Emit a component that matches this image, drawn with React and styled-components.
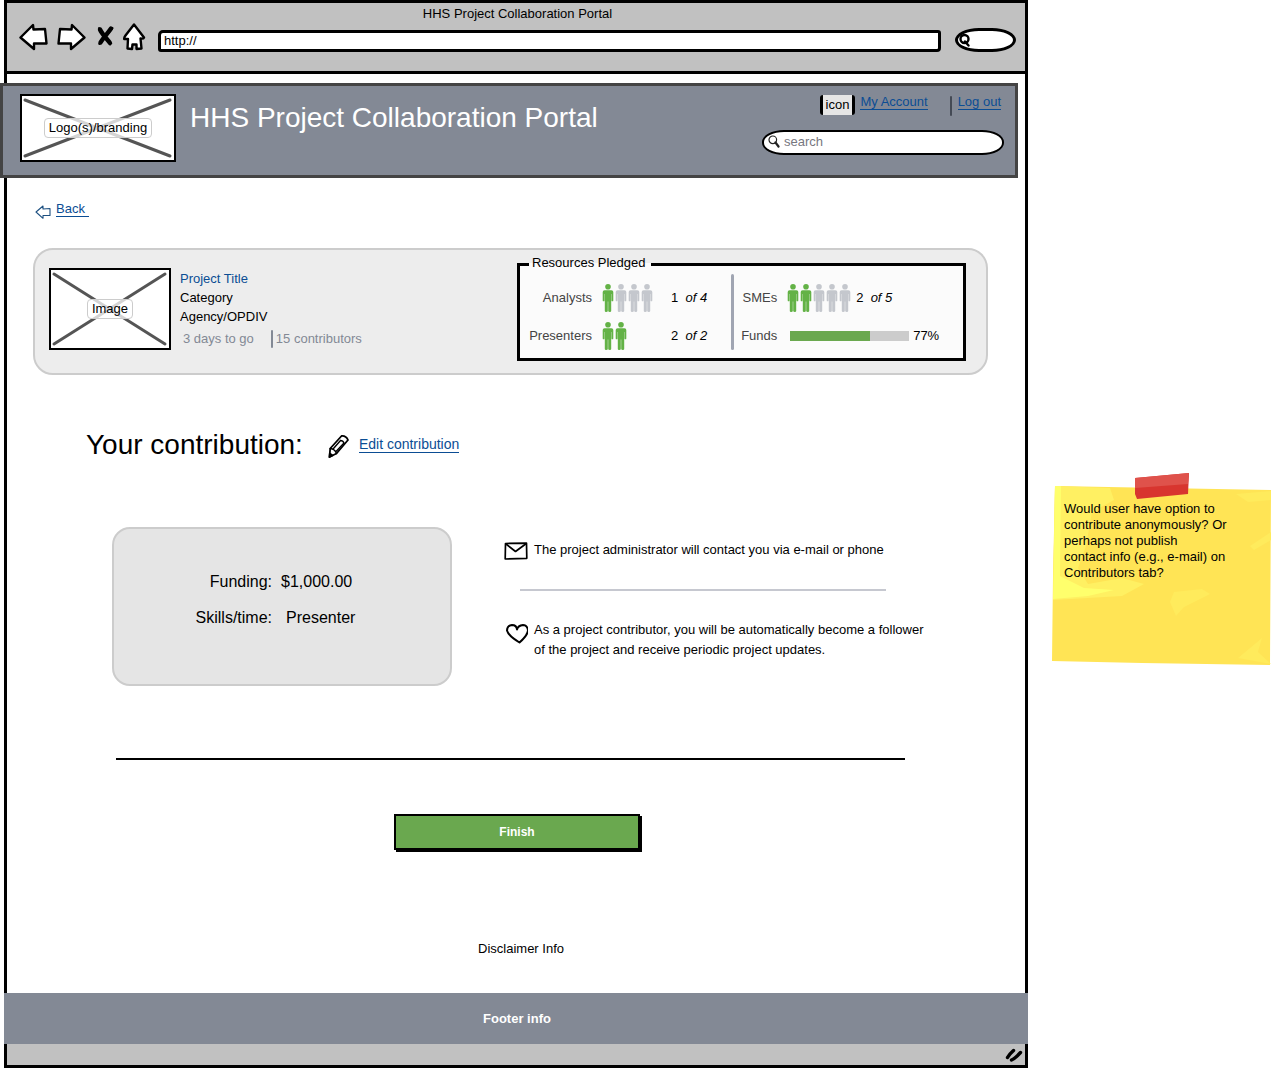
import React from 'react';
import styled, { createGlobalStyle } from 'styled-components';

const INK = '#000';
const SLATE = '#838995';
const LINK = '#0b4d94';
const GREEN = '#6aa84f';

const GlobalStyle = createGlobalStyle`
  *, *::before, *::after { box-sizing: border-box; }
  body {
    margin: 0;
    background: #fff;
    color: ${INK};
    font: 13px/18px "Liberation Sans", Arial, sans-serif;
  }
  h1, h2, p, dl, dd { margin: 0; }
  button, input { font: inherit; color: inherit; }
  svg { display: block; flex: none; }
`;

const Page = styled.div`
  display: grid;
  grid-template-columns: minmax(0, 1fr) 219px;
  gap: 24px;
  align-items: start;
  padding: 0 2px 0 4px;
`;

/* Browser window */
const Window = styled.div`
  border: 3px solid ${INK};
  background: #fff;
`;

const Chrome = styled.div`
  background: #c1c1c1;
  border-bottom: 3px solid ${INK};
  padding: 2px 9px 18px 12px;
`;

const WindowTitle = styled.div`
  padding-top: 1px;
  text-align: center;
  line-height: 15px;
`;

const Toolbar = styled.div`
  display: flex;
  align-items: center;
  height: 32px;
`;

const NavButtons = styled.div`
  display: flex;
  align-items: center;
  gap: 8px;
  margin-right: 11px;
`;

const IconButton = styled.button`
  display: block;
  padding: 0;
  border: 0;
  background: none;
`;

const AddressInput = styled.input`
  flex: 1;
  min-width: 0;
  height: 22px;
  margin-top: 7px;
  padding: 0 3px 1px;
  border: 3px solid ${INK};
  border-radius: 5px 3px 4px 3px;
  background: #fff;
`;

const ChromeSearch = styled.label`
  display: flex;
  align-items: center;
  width: 61px;
  height: 24px;
  margin: 6px 0 0 14px;
  padding-left: 1px;
  border: 3px solid ${INK};
  border-radius: 24px / 12px;
  background: #fff;
`;

const BareInput = styled.input`
  flex: 1;
  min-width: 0;
  padding: 0;
  border: 0;
  outline: 0;
  background: none;
  &::placeholder { color: #77777f; opacity: 1; }
`;

/* Site header */
const SiteHeader = styled.header`
  display: flex;
  align-items: flex-start;
  gap: 14px;
  margin: 9px 7px 0 -7px;
  padding: 8px 11px 13px 17px;
  border: 3px solid #444;
  background: ${SLATE};
`;

const SiteTitle = styled.h1`
  flex: 1;
  padding-top: 8px;
  color: #fff;
  font-size: 28px;
  font-weight: 400;
  line-height: 32px;
`;

const HeaderTools = styled.div`
  width: 242px;
`;

const AccountLinks = styled.nav`
  display: flex;
  align-items: flex-start;
  justify-content: flex-end;
  height: 22px;
  padding-right: 3px;
`;

const Link = styled.a`
  color: ${LINK};
  font-size: ${(p) => (p.$large ? '14px' : '13px')};
  line-height: 15px;
  white-space: pre;
  text-decoration: none;
  border-bottom: 1px solid ${LINK};
`;

const AccountIcon = styled.span`
  margin: 1px 5px 0 0;
  padding: 0 3px;
  border: solid ${INK};
  border-width: 0 3px;
  border-radius: 3px;
  background: #e6e6e6;
  line-height: 20px;
`;

const Divider = styled.span`
  width: ${(p) => p.$width || '2px'};
  margin: ${(p) => p.$margin || '0'};
  border-radius: 2px;
  background: ${(p) => p.$color || SLATE};
  align-self: stretch;
`;

const SiteSearch = styled.label`
  display: flex;
  align-items: center;
  gap: 4px;
  height: 25px;
  margin-top: 14px;
  padding: 0 12px 2px 4px;
  border: 2px solid ${INK};
  border-radius: 22px / 12px;
  background: #fff;
`;

/* Image placeholder */
const PlaceholderBox = styled.div`
  position: relative;
  display: flex;
  flex: none;
  align-items: center;
  justify-content: center;
  width: ${(p) => p.$width};
  height: ${(p) => p.$height};
  margin-top: ${(p) => p.$top || '0'};
  border: 2px solid ${INK};
  background: #fff;
  > svg { position: absolute; inset: 0; }
`;

const PlaceholderLabel = styled.span`
  position: relative;
  padding: 0 4px;
  border: 1px solid #ccc;
  border-radius: 4px;
  background: rgba(255, 255, 255, 0.75);
`;

/* Main content */
const Main = styled.main`
  padding: 23px 37px 0 26px;
`;

const BackRow = styled.div`
  display: flex;
  align-items: flex-start;
  gap: 5px;
  height: 18px;
  padding-left: 2px;
  > svg { margin-top: 4px; }
`;

const ProjectCard = styled.section`
  display: flex;
  align-items: flex-start;
  margin-top: 29px;
  padding: 4px 20px 12px 14px;
  border: 2px solid #ccc;
  border-radius: 20px;
  background: #ededed;
`;

const ProjectText = styled.div`
  display: grid;
  gap: 1px;
  flex: 1;
  padding: 16px 0 0 9px;
`;

const ProjectTitle = styled.h2`
  color: ${LINK};
  font-size: 13px;
  font-weight: 400;
`;

const ProjectMeta = styled.div`
  display: flex;
  padding: 3px 0 0 3px;
  color: ${SLATE};
`;

const Resources = styled.fieldset`
  display: block;
  width: 449px;
  min-width: 0;
  margin: 0;
  padding: 0 9px;
  border: 3px solid ${INK};
  background: #fbfbfb;
`;

const ResourcesLegend = styled.legend`
  padding: 0 6px 2px 3px;
  line-height: 18px;
`;

const ResourceColumns = styled.div`
  display: flex;
  padding-bottom: 8px;
`;

const ResourceColumn = styled.div`
  display: grid;
  gap: 10px;
  padding: 10px 0 0 ${(p) => p.$indent};
`;

const ResourceRow = styled.div`
  display: flex;
  align-items: center;
  height: 28px;
`;

const ResourceLabel = styled.span`
  width: ${(p) => p.$width};
  margin-right: 10px;
  color: #444;
  text-align: right;
`;

const People = styled.span`
  display: flex;
  gap: 1px;
  width: ${(p) => p.$width || 'auto'};
`;

const Count = styled.span`
  padding-left: ${(p) => p.$gap || '0'};
  white-space: pre;
`;

const MeterTrack = styled.span`
  width: 119px;
  height: 10px;
  margin-left: 3px;
  background: #ccc;
`;

const MeterFill = styled.span`
  display: block;
  height: 100%;
  background: ${GREEN};
`;

const ContributionHead = styled.div`
  display: flex;
  align-items: center;
  margin-top: 54px;
  padding-left: 53px;
`;

const ContributionTitle = styled.h2`
  margin-right: 24px;
  font-size: 28px;
  font-weight: 400;
  line-height: 32px;
`;

const EditLink = styled(Link)`
  margin-left: 10px;
`;

const ContributionBody = styled.div`
  display: flex;
  align-items: flex-start;
  gap: 52px;
  margin-top: 66px;
  padding-left: 79px;
`;

const Summary = styled.dl`
  display: grid;
  gap: 16px;
  width: 340px;
  padding: 43px 0 56px 76px;
  border: 2px solid #ccc;
  border-radius: 18px;
  background: #e5e5e5;
  font-size: 16px;
  line-height: 20px;
`;

const SummaryRow = styled.div`
  display: grid;
  grid-template-columns: 82px 1fr;
  gap: ${(p) => p.$gap};
`;

const SummaryTerm = styled.dt`
  text-align: right;
`;

const Notices = styled.div`
  flex: 1;
  padding-top: 13px;
`;

const Notice = styled.div`
  display: flex;
  gap: 6px;
  line-height: 20px;
  > svg { margin-top: 2px; }
`;

const Rule = styled.hr`
  height: 2px;
  margin: ${(p) => p.$margin};
  border: 0;
  background: ${(p) => p.$color};
`;

const Closing = styled.div`
  display: flex;
  flex-direction: column;
  align-items: center;
  gap: 90px;
  padding: 54px 0 35px 2px;
`;

const FinishButton = styled.button`
  width: 246px;
  height: 36px;
  border: 2px solid ${INK};
  background: ${GREEN};
  box-shadow: 2px 2px 0 ${INK};
  color: #fff;
  font-size: 12px;
  font-weight: 700;
`;

const Disclaimer = styled.p`
  padding-left: 8px;
`;

const Footer = styled.footer`
  margin: 0 -3px;
  padding: 17px 0 16px 2px;
  background: ${SLATE};
  color: #fff;
  font-weight: 700;
  text-align: center;
`;

const StatusBar = styled.div`
  display: flex;
  justify-content: flex-end;
  padding: 4px 2px 3px;
  background: #c1c1c1;
`;

/* Sticky note */
const Note = styled.aside`
  position: relative;
  min-height: 180px;
  margin-top: 486px;
  padding: 15px 12px;
  line-height: 16px;
`;

const NotePaper = styled.svg`
  position: absolute;
  inset: 0;
  width: 100%;
  height: 100%;
`;

const NoteTape = styled.svg`
  position: absolute;
  top: -14px;
  left: 82px;
`;

const NoteText = styled.p`
  position: relative;
`;

function Placeholder({ label, width, height, top }) {
  return (
    <PlaceholderBox $width={`${width}px`} $height={`${height}px`} $top={top}>
      <svg width={width - 4} height={height - 4} stroke="#555" strokeWidth="3" strokeLinecap="round">
        <path d={`M3 4L${width - 8} ${height - 8}M${width - 8} 4L3 ${height - 8}`} />
      </svg>
      <PlaceholderLabel>{label}</PlaceholderLabel>
    </PlaceholderBox>
  );
}

function Person({ on }) {
  return (
    <svg width="12" height="28" viewBox="0 0 12 28" fill={on ? '#63b246' : '#c4c7cd'}>
      <circle cx="6" cy="2.8" r="2.8" />
      <path d="M2.600 6.200h6.800q1.900 0 1.900 1.900v8.300q0 .9-.9.9t-.9-.9V10h-.3V27q0 1-1.400 1T6.200 27V17.500h-.4V27q0 1-1.600 1T2.800 27V10h-.3v6.400q0 .9-.9.900t-.9-.9V8.100q0-1.900 1.900-1.900z" />
    </svg>
  );
}

function PeopleCount({ pledged, total, width }) {
  return (
    <People $width={width}>
      {Array.from({ length: total }, (_, i) => (
        <Person key={i} on={i < pledged} />
      ))}
    </People>
  );
}

function Arrow({ flip }) {
  return (
    <svg width="30" height="28" viewBox="0 0 30 28" fill="#fff" stroke="#000" strokeWidth="2.4" strokeLinejoin="round" strokeLinecap="round">
      <path
        transform={flip ? 'translate(29 0) scale(-1 1)' : undefined}
        d="M1.500 14.500L14 2L14.500 6.500L26 6L27.500 20.500L15 20.500L15 26Q8 20 1.500 14.500Z"
      />
    </svg>
  );
}

export default function App() {
  return (
    <>
      <GlobalStyle />
      <Page>
        <Window>
          <Chrome>
            <WindowTitle>HHS Project Collaboration Portal</WindowTitle>
            <Toolbar>
              <NavButtons>
                <IconButton aria-label="Back"><Arrow /></IconButton>
                <IconButton aria-label="Forward"><Arrow flip /></IconButton>
                <IconButton aria-label="Stop">
                  <svg width="20" height="24" viewBox="0 0 20 24" fill="none" stroke="#000" strokeLinecap="round">
                    <path d="M5 4.500C7 9 12 14 15 18M16 3.500C13 8 8 13 5.500 17.500" strokeWidth="4.400" />
                    <path d="M4 3L15 19.500M17.500 3L4.300 19" strokeWidth="2" />
                  </svg>
                </IconButton>
                <IconButton aria-label="Home">
                  <svg width="24" height="28" viewBox="0 0 24 28" fill="#fff" stroke="#000" strokeWidth="2.400" strokeLinejoin="round">
                    <path d="M11 1.500L21 14.500Q20.500 16 17.500 15.500L18.500 25.500L13.500 26V21.500H9.500L9 26L4.500 25.500L5 16L1.200 16Q1 14.500 2.500 12.500Z" />
                  </svg>
                </IconButton>
              </NavButtons>
              <AddressInput type="text" aria-label="Address" defaultValue="http://" />
              <ChromeSearch>
                <svg width="12" height="14" viewBox="0 0 12 14" fill="none" stroke="#000" strokeWidth="2.400" strokeLinecap="round">
                  <circle cx="5.500" cy="6" r="4" />
                  <path d="M6 8.500L9.500 12.500" />
                </svg>
                <BareInput type="text" aria-label="Web search" />
              </ChromeSearch>
            </Toolbar>
          </Chrome>

          <SiteHeader>
            <Placeholder label="Logo(s)/branding" width={156} height={68} />
            <SiteTitle>HHS Project Collaboration Portal</SiteTitle>
            <HeaderTools>
              <AccountLinks>
                <AccountIcon>icon</AccountIcon>
                <Link href="#account">My Account</Link>
                <Divider $color="#444a55" $margin="2px 6px 0 22px" />
                <Link href="#logout">Log out</Link>
              </AccountLinks>
              <SiteSearch>
                <svg width="12" height="13" viewBox="0 0 12 13" fill="none" stroke="#222" strokeLinecap="round">
                  <circle cx="4.800" cy="4.800" r="3.800" strokeWidth="1.200" />
                  <path d="M7.500 7.500L10.500 11.500" strokeWidth="2.200" />
                </svg>
                <BareInput type="text" aria-label="Search" placeholder="search" />
              </SiteSearch>
            </HeaderTools>
          </SiteHeader>

          <Main>
            <BackRow>
              <svg width="16" height="14" viewBox="0 0 16 14" fill="#fff" stroke="#1c4f80" strokeWidth="1.100" strokeLinejoin="round">
                <path d="M1 7L8 1V4L15 3.500V10.500L8 10.500V13.300Z" />
              </svg>
              <Link href="#back">{'Back '}</Link>
            </BackRow>

            <ProjectCard>
              <Placeholder label="Image" width={122} height={82} top="14px" />
              <ProjectText>
                <ProjectTitle>Project Title</ProjectTitle>
                <p>Category</p>
                <p>Agency/OPDIV</p>
                <ProjectMeta>
                  <span>3 days to go</span>
                  <Divider $margin="0 3px 0 17px" />
                  <span>15 contributors</span>
                </ProjectMeta>
              </ProjectText>
              <Resources>
                <ResourcesLegend>Resources Pledged</ResourcesLegend>
                <ResourceColumns>
                  <ResourceColumn $indent="0px">
                    <ResourceRow>
                      <ResourceLabel $width="63px">Analysts</ResourceLabel>
                      <PeopleCount pledged={1} total={4} width="69px" />
                      <Count>1  <em>of 4</em></Count>
                    </ResourceRow>
                    <ResourceRow>
                      <ResourceLabel $width="63px">Presenters</ResourceLabel>
                      <PeopleCount pledged={2} total={2} width="69px" />
                      <Count>2  <em>of 2</em></Count>
                    </ResourceRow>
                  </ResourceColumn>
                  <Divider $width="3px" $color="#a0a5b2" $margin="0 0 0 24px" />
                  <ResourceColumn $indent="7px">
                    <ResourceRow>
                      <ResourceLabel $width="36px">SMEs</ResourceLabel>
                      <PeopleCount pledged={2} total={5} />
                      <Count $gap="5px">2  <em>of 5</em></Count>
                    </ResourceRow>
                    <ResourceRow>
                      <ResourceLabel $width="36px">Funds</ResourceLabel>
                      <MeterTrack role="img" aria-label="Funds pledged">
                        <MeterFill style={{ width: `${(80 / 119) * 100}%` }} />
                      </MeterTrack>
                      <Count $gap="4px">77%</Count>
                    </ResourceRow>
                  </ResourceColumn>
                </ResourceColumns>
              </Resources>
            </ProjectCard>

            <ContributionHead>
              <ContributionTitle>Your contribution:</ContributionTitle>
              <svg width="22" height="28" viewBox="0 0 22 28" fill="#fff" stroke="#000" strokeWidth="1.800" strokeLinejoin="round" strokeLinecap="round">
                <path d="M2.500 26L3.200 17.500L14.500 5Q19 4.500 21 9L9.500 22.500Z" />
                <path d="M3.200 17.500Q8 18 9.500 22.500M13.500 9.500Q16 9.500 17 12L9.500 20M13.500 9.500L6.500 17.500" strokeWidth="1.400" />
                <path d="M2.500 26L2.800 22.500L5.500 24.500Z" fill="#000" />
              </svg>
              <EditLink href="#edit" $large>Edit contribution</EditLink>
            </ContributionHead>

            <ContributionBody>
              <Summary>
                <SummaryRow $gap="9px">
                  <SummaryTerm>Funding:</SummaryTerm>
                  <dd>$1,000.00</dd>
                </SummaryRow>
                <SummaryRow $gap="14px">
                  <SummaryTerm>Skills/time:</SummaryTerm>
                  <dd>Presenter</dd>
                </SummaryRow>
              </Summary>
              <Notices>
                <Notice>
                  <svg width="24" height="18" viewBox="0 0 24 18" fill="#fff" stroke="#000" strokeWidth="1.700" strokeLinejoin="round" strokeLinecap="round">
                    <path d="M1.500 1.500L22.500 1.200L22.800 16.300L1.200 17Z" />
                    <path d="M2 2L11.500 9.500L22 1.800" fill="none" />
                  </svg>
                  <p>The project administrator will contact you via e-mail or phone</p>
                </Notice>
                <Rule $margin="29px 102px 29px 16px" $color="#c6c8d0" />
                <Notice>
                  <svg width="24" height="22" viewBox="0 0 24 22" fill="#fff" stroke="#000" strokeWidth="2" strokeLinejoin="round" strokeLinecap="round">
                    <path d="M13 7.500Q12.500 3 8 3Q3 3.500 3 8.500Q4.500 14 15.500 20.500Q24 13 24 8Q23 3 19 3Q14 3.500 13 7.500Z" />
                  </svg>
                  <p>
                    As a project contributor, you will be automatically become a follower
                    <br />
                    of the project and receive periodic project updates.
                  </p>
                </Notice>
              </Notices>
            </ContributionBody>

            <Rule $margin="72px 83px 0" $color="#000" />
          </Main>

          <Closing>
            <FinishButton type="button">Finish</FinishButton>
            <Disclaimer>Disclaimer Info</Disclaimer>
          </Closing>

          <Footer>Footer info</Footer>
          <StatusBar>
            <svg width="18" height="14" viewBox="0 0 18 14" fill="none" stroke="#000" strokeWidth="3.400" strokeLinecap="round">
              <path d="M2.500 9.500Q4 6.500 8.500 2.500M6.500 12Q10 10.500 15.500 4.500" />
            </svg>
          </StatusBar>
        </Window>

        <Note>
          <NotePaper viewBox="0 0 219 180" preserveAspectRatio="none">
            <path d="M3 0L110 2L219 4L218 179L90 177L0 175L1 90Z" fill="#ffe455" />
            <path d="M3 0L58 2L62 14L40 26L34 60L26 82L36 98L70 92L92 98L70 110L1 114Z" fill="#fff062" />
            <path d="M3 0H9L8 90L32 102L62 104L36 110L1 113Z" fill="#ffff6c" />
            <path d="M122 106L150 103L158 108L132 121L124 130L118 116ZM198 60L219 46V54L202 64ZM184 8L219 5V14L196 16ZM186 172L210 152L206 166L219 178Z" fill="#ffeb5c" />
          </NotePaper>
          <NoteTape width="56" height="28" viewBox="0 0 56 28">
            <path d="M1 6L55 1L54 22L3 27L1 22Z" fill="#d8352f" />
            <path d="M1 6L55 1L54 12L1 16Z" fill="#df524b" />
          </NoteTape>
          <NoteText>
            Would user have option to
            <br />
            contribute anonymously? Or
            <br />
            perhaps not publish
            <br />
            contact info (e.g., e-mail) on
            <br />
            Contributors tab?
          </NoteText>
        </Note>
      </Page>
    </>
  );
}
